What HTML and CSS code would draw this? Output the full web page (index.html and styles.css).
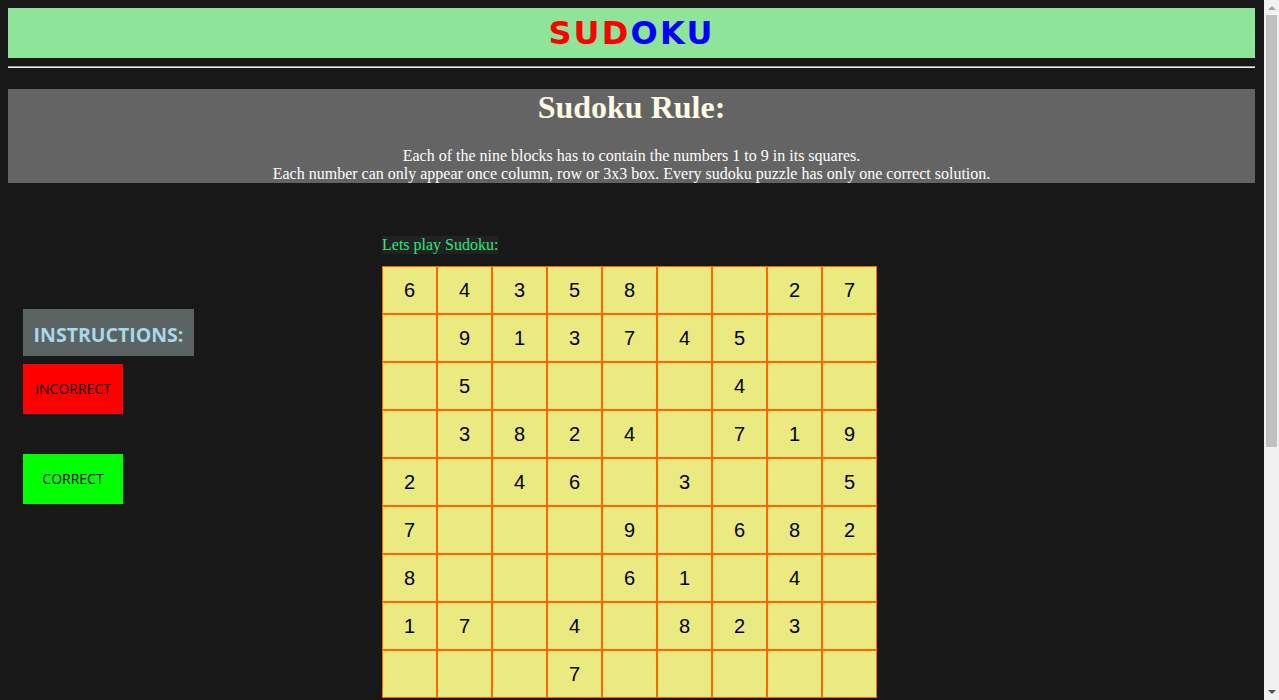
FILE: index.html
```html
<!DOCTYPE html>
<html lang="en">
<head>
<meta charset="utf-8">
<title>Sudoku</title>
<link rel="stylesheet" href="styles.css">
</head>
<body>
<header class="banner">
  <span class="red">SUD</span><span class="blue">OKU</span>
</header>
<hr class="divider">
<section class="rules">
  <h1 class="rules-title">Sudoku Rule:</h1>
  <div class="rules-text">Each of the nine blocks has to contain the numbers 1 to 9 in its squares.<br>Each number can only appear once column, row or 3x3 box. Every sudoku puzzle has only one correct solution.</div>
</section>
<main class="game">
  <aside class="side">
    <div class="instructions">INSTRUCTIONS:</div>
    <div class="btn incorrect">INCORRECT</div>
    <div class="btn correct">CORRECT</div>
  </aside>
  <div class="board">
    <span class="caption">Lets play Sudoku:</span>
    <table class="grid">
      <tr><td>6</td><td>4</td><td>3</td><td>5</td><td>8</td><td></td><td></td><td>2</td><td>7</td></tr>
      <tr><td></td><td>9</td><td>1</td><td>3</td><td>7</td><td>4</td><td>5</td><td></td><td></td></tr>
      <tr><td></td><td>5</td><td></td><td></td><td></td><td></td><td>4</td><td></td><td></td></tr>
      <tr><td></td><td>3</td><td>8</td><td>2</td><td>4</td><td></td><td>7</td><td>1</td><td>9</td></tr>
      <tr><td>2</td><td></td><td>4</td><td>6</td><td></td><td>3</td><td></td><td></td><td>5</td></tr>
      <tr><td>7</td><td></td><td></td><td></td><td>9</td><td></td><td>6</td><td>8</td><td>2</td></tr>
      <tr><td>8</td><td></td><td></td><td></td><td>6</td><td>1</td><td></td><td>4</td><td></td></tr>
      <tr><td>1</td><td>7</td><td></td><td>4</td><td></td><td>8</td><td>2</td><td>3</td><td></td></tr>
      <tr><td></td><td></td><td></td><td>7</td><td></td><td></td><td></td><td></td><td></td></tr>
    </table>
  </div>
</main>
<div class="scrollbar" aria-hidden="true">
  <span class="sb-arrow sb-up"></span>
  <span class="sb-thumb"></span>
  <span class="sb-arrow sb-down"></span>
</div>
</body>
</html>
```

FILE: styles.css
```css
html, body {
  background: #181818;
}
body {
  margin: 8px 24px 8px 8px;
  font-family: "Liberation Serif", "Times New Roman", serif;
  font-size: 16px;
  color: #ffffff;
}
.banner {
  display: block;
  height: 50px;
  line-height: 50px;
  background: #8ee59a;
  text-align: center;
  font-family: "DejaVu Sans", Verdana, sans-serif;
  font-weight: bold;
  font-size: 32px;
  letter-spacing: 2.2px;
}
.red { color: #ff0000; }
.blue { color: #0000ff; }
.divider {
  margin: 8px 0 0;
  height: 0;
  border: 0;
  border-top: 1px solid #9a9a9a;
  border-bottom: 1px solid #eeeeee;
}
.rules {
  margin-top: 21px;
  background: #646464;
  text-align: center;
}
.rules-title {
  margin: 0 0 21px;
  font-size: 32px;
  line-height: 37px;
  font-weight: bold;
  color: #fffbe4;
}
.rules-text {
  line-height: 18px;
  color: #ffffff;
}
.game {
  display: flex;
  margin-top: 53px;
  padding-bottom: 374px;
}
.side {
  width: 359px;
  padding-left: 15px;
  padding-top: 73px;
  display: flex;
  flex-direction: column;
  align-items: flex-start;
}
.instructions {
  width: 171px;
  height: 47px;
  line-height: 51px;
  background: #5b6363;
  color: #a8d8ea;
  font-family: "Open Sans", "DejaVu Sans", sans-serif;
  font-weight: bold;
  font-size: 19.5px;
  text-align: center;
  overflow: hidden;
}
.btn {
  width: 100px;
  height: 50px;
  line-height: 50px;
  text-align: center;
  color: #000000;
  font-family: "Open Sans", "DejaVu Sans", sans-serif;
  font-size: 14px;
}
.incorrect {
  margin-top: 8px;
  background: #ff0000;
}
.correct {
  margin-top: 40px;
  background: #00ff00;
}
.board {
  display: flex;
  flex-direction: column;
  align-items: flex-start;
}
.caption {
  display: inline-block;
  height: 18px;
  line-height: 18px;
  background: #222222;
  color: #1fec7c;
  margin-bottom: 12px;
}
.grid {
  border-collapse: separate;
  border-spacing: 0;
}
.grid td {
  width: 53px;
  height: 46px;
  padding: 0;
  border: 1px solid #ff6600;
  background: #eaea80;
  color: #000000;
  text-align: center;
  vertical-align: middle;
  font-family: "Liberation Sans", Arial, sans-serif;
  font-size: 20px;
}
.scrollbar {
  position: fixed;
  top: 0;
  right: 0;
  width: 15px;
  height: 100%;
  background: #f1f1f1;
  display: flex;
  flex-direction: column;
  align-items: center;
}
.sb-arrow {
  flex: none;
  width: 0;
  height: 0;
  border-left: 4px solid transparent;
  border-right: 4px solid transparent;
}
.sb-up {
  margin: 6px 0 5px;
  border-bottom: 4px solid #a3a3a3;
}
.sb-down {
  margin: auto 0 6px;
  border-top: 4px solid #505050;
}
.sb-thumb {
  flex: none;
  width: 11px;
  height: 432px;
  background: #c1c1c1;
}
```
